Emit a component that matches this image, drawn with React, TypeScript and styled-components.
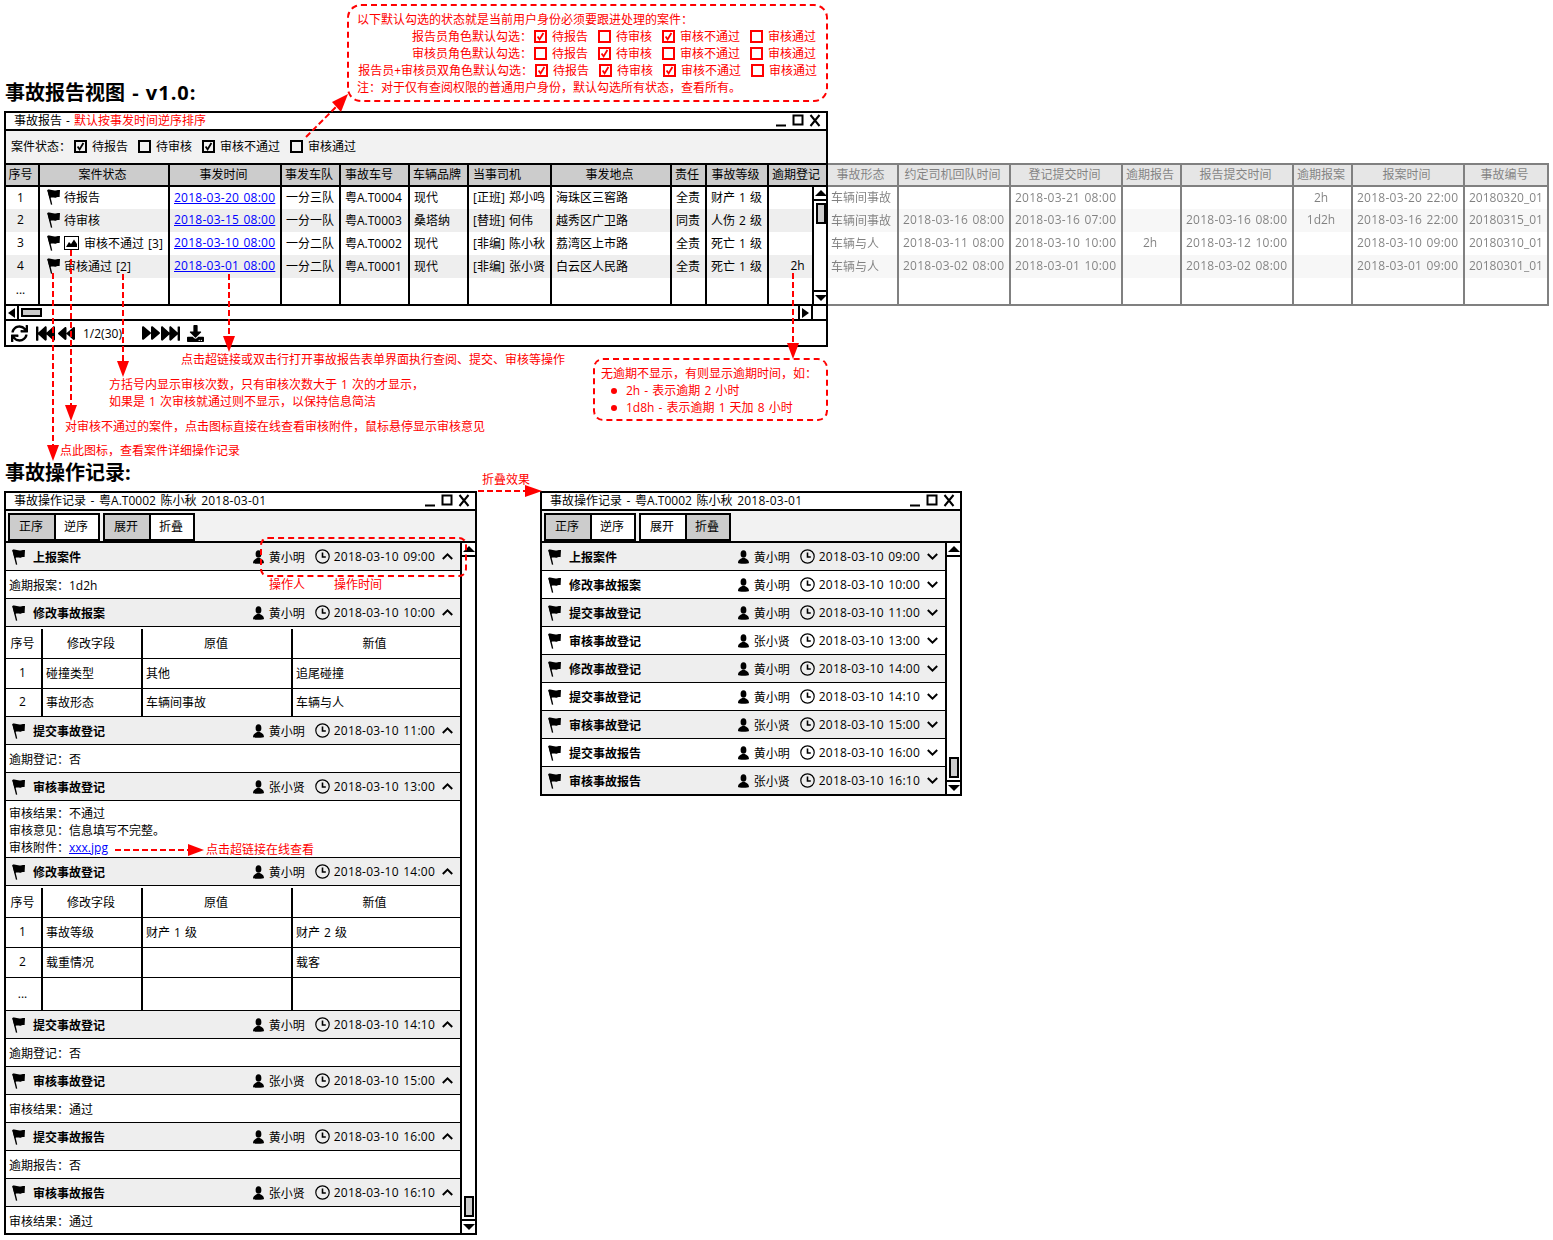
import React from "react";
import styled, { createGlobalStyle } from "styled-components";
import { FaSync, FaFastBackward, FaBackward, FaForward, FaFastForward, FaDownload } from "react-icons/fa";

const C = "\uFF1A";
const K = "\uFF0C";
const P = "\u3002";

const Global = createGlobalStyle`
  html, body { margin: 0; padding: 0; background: #fff; }
  body { font-family: "Open Sans", "Noto Sans CJK SC", sans-serif; font-size: 12px; color: #000; word-spacing: 1px; }
`;

const Canvas = styled.div`
  position: relative;
  width: 1553px;
  height: 1240px;
  overflow: hidden;
`;

const Heading = styled.h1<{ $y: number }>`
  position: absolute;
  left: 5px;
  top: ${(p) => p.$y}px;
  margin: 0;
  font-size: 20px;
  line-height: 24px;
  font-weight: 700;
  white-space: nowrap;
  word-spacing: 2px;
`;

const Version = styled.span`
  letter-spacing: 1px;
`;

const Win = styled.section<{ $x: number; $y: number; $w: number; $h: number }>`
  position: absolute;
  left: ${(p) => p.$x}px;
  top: ${(p) => p.$y}px;
  width: ${(p) => p.$w}px;
  height: ${(p) => p.$h}px;
  box-sizing: border-box;
  border: 2px solid #000;
  background: #fff;
  display: flex;
  flex-direction: column;
  overflow: hidden;
`;

const TitleBar = styled.header`
  height: 16px;
  flex: none;
  box-sizing: content-box;
  border-bottom: 2px solid #000;
  padding: 0 5px 0 8px;
  display: flex;
  align-items: center;
  justify-content: space-between;
  line-height: 16px;
  white-space: nowrap;
`;

const Red = styled.span`
  color: #f00;
`;

const WinControls = styled.span`
  display: flex;
  align-items: center;
`;

const Controls = () => (
  <WinControls>
    <svg width="45" height="14" viewBox="0 0 45 14">
      <rect x="0" y="10.5" width="10" height="2" fill="#000" />
      <rect x="17.5" y="1.5" width="9" height="9" fill="none" stroke="#000" strokeWidth="2" />
      <path d="M34.5 1 L43.5 12 M43.5 1 L34.5 12" stroke="#000" strokeWidth="2" fill="none" />
    </svg>
  </WinControls>
);

const FilterBar = styled.div`
  height: 32px;
  flex: none;
  box-sizing: border-box;
  background: #f2f2f2;
  display: flex;
  align-items: center;
  padding: 0 0 2px 5px;
`;

const FilterLabel = styled.span`
  width: 63px;
  flex: none;
  white-space: nowrap;
`;

const CheckItem = styled.label<{ $color?: string }>`
  display: inline-flex;
  align-items: center;
  gap: 5px;
  margin-right: 10px;
  color: ${(p) => p.$color || "#000"};
  white-space: nowrap;
`;

const Box = styled.span`
  width: 13px;
  height: 13px;
  box-sizing: border-box;
  border: 2px solid currentColor;
  display: inline-block;
  flex: none;
  position: relative;
`;

const Check = ({ on, label, color }: { on: boolean; label: string; color?: string }) => (
  <CheckItem $color={color}>
    <Box>
      {on && (
        <svg width="9" height="9" viewBox="0 0 9 9" style={{ display: "block" }}>
          <path d="M1.6 4.6 L3.6 7.4 L7.4 1" fill="none" stroke="currentColor" strokeWidth="1.8" />
        </svg>
      )}
    </Box>
    {label}
  </CheckItem>
);

const mainHead = "34px 130px 112px 59px 69px 59px 83px 120px 35px 62px 57px";
const mainBody = "34px 130px 112px 59px 69px 59px 83px 120px 35px 62px 43px";
const greyCols = "72px 112px 112px 59px 112px 59px 112px 84px";

const Grid = styled.div<{ $cols: string; $rows: string }>`
  display: grid;
  grid-template-columns: ${(p) => p.$cols};
  grid-template-rows: ${(p) => p.$rows};
`;

const MainHead = styled(Grid)`
  border-top: 2px solid #000;
  flex: none;
`;

const MainBody = styled.div`
  display: flex;
  flex: none;
  height: 117px;
  box-sizing: content-box;
  border-bottom: 2px solid #000;
`;

type CellKind = "head" | "headLeft" | "center" | "text";

const Cell = styled.div<{ $kind?: CellKind; $alt?: boolean; $end?: boolean; $shift?: number }>`
  box-sizing: border-box;
  display: flex;
  align-items: center;
  white-space: nowrap;
  overflow: hidden;
  justify-content: ${(p) => (p.$kind === "head" || p.$kind === "center" ? "center" : "flex-start")};
  padding: 0 ${(p) => (p.$kind === "head" || p.$kind === "center" ? 3 : 0)}px 2px
    ${(p) => p.$shift ?? (p.$kind === "head" || p.$kind === "center" ? 0 : 4)}px;
  background: ${(p) => (p.$kind === "head" || p.$kind === "headLeft" ? "#ccc" : p.$alt ? "#eee" : "#fff")};
  border-right: ${(p) => (p.$end ? "none" : "2px solid #000")};
  border-bottom: ${(p) => (p.$kind === "head" || p.$kind === "headLeft" ? "2px solid #000" : "none")};
`;

const StatusCell = styled(Cell)`
  padding-left: 7px;
  gap: 4px;
`;

const DateLink = styled.a`
  color: #00f;
  text-decoration: underline;
  letter-spacing: 0.25px;
`;

const DateText = styled.span`
  letter-spacing: 0.25px;
`;

const WinTitle = styled.span`
  word-spacing: 1.5px;
`;

const More = styled.span`
  color: #000;
  line-height: 12px;
`;

const ScrollCol = styled.div`
  flex: none;
  width: 13px;
  box-sizing: content-box;
  border-left: 2px solid #000;
  display: flex;
  flex-direction: column;
  background: #fff;
`;

const ArrowBox = styled.div<{ $edge: "top" | "bottom" }>`
  height: 12px;
  flex: none;
  box-sizing: content-box;
  display: flex;
  align-items: center;
  justify-content: center;
  ${(p) => (p.$edge === "top" ? "border-bottom: 2px solid #000;" : "border-top: 2px solid #000;")}
`;

const Tri = styled.i<{ $dir: "up" | "down" | "left" | "right" }>`
  width: 0;
  height: 0;
  display: block;
  ${(p) =>
    p.$dir === "up"
      ? "border-left:6px solid transparent;border-right:6px solid transparent;border-bottom:6px solid #000;"
      : p.$dir === "down"
      ? "border-left:6px solid transparent;border-right:6px solid transparent;border-top:6px solid #000;"
      : p.$dir === "left"
      ? "border-top:5px solid transparent;border-bottom:5px solid transparent;border-right:7px solid #000;"
      : "border-top:5px solid transparent;border-bottom:5px solid transparent;border-left:7px solid #000;"}
`;

const Track = styled.div<{ $end?: boolean }>`
  flex: 1;
  display: flex;
  flex-direction: column;
  align-items: center;
  justify-content: ${(p) => (p.$end ? "flex-end" : "flex-start")};
  padding: 2px 0;
`;

const VThumb = styled.div`
  width: 10px;
  height: 21px;
  box-sizing: border-box;
  border: 2px solid #000;
  background: #ccc;
  flex: none;
`;

const VScroll = ({ end }: { end?: boolean }) => (
  <ScrollCol>
    <ArrowBox $edge="top">
      <Tri $dir="up" />
    </ArrowBox>
    <Track $end={end}>
      <VThumb />
    </Track>
    <ArrowBox $edge="bottom">
      <Tri $dir="down" />
    </ArrowBox>
  </ScrollCol>
);

const HScrollBar = styled.div`
  height: 13px;
  flex: none;
  box-sizing: content-box;
  border-bottom: 2px solid #000;
  display: flex;
`;

const HArrow = styled.div<{ $side: "left" | "right" }>`
  flex: none;
  width: 11px;
  display: flex;
  align-items: center;
  justify-content: center;
  ${(p) =>
    p.$side === "left"
      ? "border-right: 2px solid #000;"
      : "border-left: 2px solid #000; border-right: 2px solid #000;"}
`;

const HTrack = styled.div`
  flex: 1;
  padding: 2px 2px;
`;

const HThumb = styled.div`
  width: 21px;
  height: 9px;
  box-sizing: border-box;
  border: 2px solid #000;
  background: #ccc;
`;

const HCorner = styled.div`
  width: 13px;
  flex: none;
`;

const Pager = styled.div`
  flex: 1;
  display: flex;
  align-items: center;
  padding-left: 5px;
`;

const PagerText = styled.span`
  margin: 0 18px 0 8px;
  width: 41px;
  white-space: nowrap;
`;

const PagerIcon = styled.span<{ $ml?: number }>`
  display: inline-flex;
  margin-left: ${(p) => p.$ml ?? 0}px;
`;

const GreyTable = styled(Grid)`
  position: absolute;
  left: 827px;
  top: 163px;
  width: 722px;
  border-top: 2px solid #000;
  border-bottom: 2px solid #000;
  opacity: 0.5;
`;

const Callout = styled.aside<{ $x: number; $y: number; $w: number; $h: number; $r: number }>`
  position: absolute;
  left: ${(p) => p.$x}px;
  top: ${(p) => p.$y}px;
  width: ${(p) => p.$w}px;
  height: ${(p) => p.$h}px;
  box-sizing: border-box;
  border: 2px dashed #f00;
  border-radius: ${(p) => p.$r}px;
  color: #f00;
  line-height: 17px;
  white-space: nowrap;
`;

const RoleCallout = styled(Callout)`
  padding: 5px 0 0 8px;
`;

const RoleRow = styled.div`
  display: flex;
  align-items: center;
  height: 17px;
`;

const RoleLabel = styled.span<{ $w: number }>`
  width: ${(p) => p.$w}px;
  flex: none;
  box-sizing: border-box;
  padding-right: 2px;
  text-align: right;
  word-spacing: 0;
  margin-left: -1px;
`;

const OverdueCallout = styled(Callout)`
  padding: 5px 0 0 6px;
`;

const BulletRow = styled.div`
  display: flex;
  align-items: center;
  gap: 9px;
  padding-left: 10px;
`;

const Dot = styled.i`
  width: 6px;
  height: 6px;
  border-radius: 50%;
  background: #f00;
  flex: none;
`;

const Note = styled.div<{ $x: number; $y: number }>`
  position: absolute;
  left: ${(p) => p.$x}px;
  top: ${(p) => p.$y}px;
  color: #f00;
  line-height: 17px;
  white-space: nowrap;
`;

const Overlay = styled.svg`
  position: absolute;
  left: 0;
  top: 0;
  pointer-events: none;
`;

const HiLite = styled(Callout)`
  pointer-events: none;
`;

const Toolbar = styled.div`
  height: 28px;
  flex: none;
  box-sizing: content-box;
  border-bottom: 2px solid #000;
  background: #f2f2f2;
  display: flex;
  gap: 3px;
  padding: 2px 0 0 2px;
`;

const Seg = styled.div`
  display: flex;
  height: 28px;
  box-sizing: border-box;
  border: 2px solid #000;
`;

const SegBtn = styled.div<{ $on?: boolean }>`
  width: 44px;
  box-sizing: border-box;
  padding: 0 2px 2px 0;
  display: flex;
  align-items: center;
  justify-content: center;
  background: ${(p) => (p.$on ? "#ccc" : "#fff")};
  & + & {
    border-left: 2px solid #000;
  }
`;

const LogMain = styled.div`
  flex: 1;
  display: flex;
  min-height: 0;
`;

const LogList = styled.div`
  flex: 1;
  min-width: 0;
  display: flex;
  flex-direction: column;
`;

const LogHead = styled.div<{ $alt: boolean }>`
  height: 28px;
  flex: none;
  box-sizing: border-box;
  border-bottom: 1px solid #000;
  background: ${(p) => (p.$alt ? "#eee" : "#fff")};
  display: flex;
  align-items: center;
  padding: 0 7px 0 6px;
`;

const LogTitle = styled.b`
  margin-left: 8px;
  font-weight: 700;
  white-space: nowrap;
`;

const LogMeta = styled.span`
  margin-left: auto;
  display: flex;
  align-items: center;
  white-space: nowrap;
`;

const Who = styled.span`
  margin: 0 10px 0 5px;
  width: 36px;
`;

const When = styled.span`
  margin: 0 7px 0 4px;
  letter-spacing: 0.25px;
`;

const LogBody = styled.div<{ $h: number }>`
  height: ${(p) => p.$h}px;
  flex: none;
  box-sizing: border-box;
  border-bottom: 1px solid #000;
  padding: 2px 0 0 3px;
  display: flex;
  flex-direction: column;
  justify-content: center;
  line-height: 17px;
`;

const BodyLink = styled.a`
  color: #00f;
  text-decoration: underline;
`;

const SubTable = styled.div<{ $h: number }>`
  height: ${(p) => p.$h}px;
  flex: none;
  box-sizing: border-box;
  border-bottom: 1px solid #000;
  padding-top: 2px;
  display: flex;
  flex-direction: column;
`;

const SubRow = styled.div<{ $last?: boolean }>`
  display: grid;
  grid-template-columns: 37px 100px 150px 165px;
  ${(p) => (p.$last ? "flex: 1;" : "height: 30px; flex: none; box-sizing: border-box; border-bottom: 1px solid #000;")}
`;

const SubCell = styled.div<{ $kind?: "center" | "text"; $end?: boolean }>`
  display: flex;
  align-items: center;
  justify-content: ${(p) => (p.$kind === "center" ? "center" : "flex-start")};
  padding: 0 ${(p) => (p.$kind === "center" ? 2 : 0)}px 2px ${(p) => (p.$kind === "center" ? 0 : 3)}px;
  box-sizing: border-box;
  border-right: ${(p) => (p.$end ? "none" : "2px solid #000")};
  white-space: nowrap;
`;

const FlagIcon = () => (
  <svg width="13" height="16" viewBox="0 0 13 16" style={{ flex: "none" }}>
    <path d="M.3 1 C3 -.2 5 1.6 7.5 1.6 C9.5 1.6 11 .6 13 1 L12.6 8 C10.5 7.6 9 9 6.8 8.6 C5 8.3 3.5 8.3 2.6 9.5 Z" fill="#000" />
    <path d="M1 1 L4.6 15.6" stroke="#000" strokeWidth="1.4" fill="none" />
  </svg>
);

const ImageIcon = () => (
  <svg width="16" height="14" viewBox="0 0 16 14" style={{ flex: "none" }}>
    <rect x=".5" y=".5" width="14" height="13" fill="#fff" stroke="#000" />
    <path d="M2 11 L5 6 L7 8 L10 3.5 L13 8 V11 Z" fill="#000" />
  </svg>
);

const UserIcon = () => (
  <svg width="11" height="14" viewBox="0 0 11 14" style={{ flex: "none" }}>
    <ellipse cx="5.5" cy="4" rx="2.9" ry="3.8" fill="#000" />
    <path d="M0 13 C0 9.8 2.4 9.2 4 8 H7 C8.6 9.2 11 9.8 11 13 C11 14 0 14 0 13 Z" fill="#000" />
  </svg>
);

const ClockIcon = () => (
  <svg width="15" height="15" viewBox="0 0 15 15" style={{ flex: "none" }}>
    <circle cx="7.5" cy="7.5" r="6.7" fill="none" stroke="#000" strokeWidth="1.2" />
    <path d="M7.5 3.5 V8 H10.8" fill="none" stroke="#000" strokeWidth="1.6" />
  </svg>
);

const Chevron = ({ up }: { up: boolean }) => (
  <svg width="11" height="7" viewBox="0 0 11 7" style={{ flex: "none" }}>
    <path d={up ? "M.8 6 L5.5 1.4 L10.2 6" : "M.8 1 L5.5 5.6 L10.2 1"} fill="none" stroke="#000" strokeWidth="2" />
  </svg>
);

const EntryHead = ({ title, who, when, alt, up }: { title: string; who: string; when: string; alt: boolean; up: boolean }) => (
  <LogHead $alt={alt}>
    <FlagIcon />
    <LogTitle>{title}</LogTitle>
    <LogMeta>
      <UserIcon />
      <Who>{who}</Who>
      <ClockIcon />
      <When>{when}</When>
      <Chevron up={up} />
    </LogMeta>
  </LogHead>
);

const ChangeTable = ({ h, rows }: { h: number; rows: string[][] }) => (
  <SubTable $h={h}>
    <SubRow>
      <SubCell $kind="center">序号</SubCell>
      <SubCell $kind="center">修改字段</SubCell>
      <SubCell $kind="center">原值</SubCell>
      <SubCell $kind="center" $end>新值</SubCell>
    </SubRow>
    {rows.map((r, i) => (
      <SubRow key={i} $last={i === rows.length - 1}>
        <SubCell $kind="center">{r[0]}</SubCell>
        <SubCell>{r[1]}</SubCell>
        <SubCell>{r[2]}</SubCell>
        <SubCell $end>{r[3]}</SubCell>
      </SubRow>
    ))}
  </SubTable>
);

const LogToolbar = ({ expanded }: { expanded: boolean }) => (
  <Toolbar>
    <Seg>
      <SegBtn $on>正序</SegBtn>
      <SegBtn>逆序</SegBtn>
    </Seg>
    <Seg>
      <SegBtn $on={expanded}>展开</SegBtn>
      <SegBtn $on={!expanded}>折叠</SegBtn>
    </Seg>
  </Toolbar>
);

const mainRows = [
  { n: "1", st: "待报告", d: "2018-03-20 08:00", team: "一分三队", car: "粤A.T0004", brand: "现代", drv: "[正班] 郑小鸣", loc: "海珠区三窖路", duty: "全责", lvl: "财产 1 级", late: "" },
  { n: "2", st: "待审核", d: "2018-03-15 08:00", team: "一分一队", car: "粤A.T0003", brand: "桑塔纳", drv: "[替班] 何伟", loc: "越秀区广卫路", duty: "同责", lvl: "人伤 2 级", late: "" },
  { n: "3", st: "审核不通过 [3]", img: true, d: "2018-03-10 08:00", team: "一分二队", car: "粤A.T0002", brand: "现代", drv: "[非编] 陈小秋", loc: "荔湾区上市路", duty: "全责", lvl: "死亡 1 级", late: "" },
  { n: "4", st: "审核通过 [2]", d: "2018-03-01 08:00", team: "一分二队", car: "粤A.T0001", brand: "现代", drv: "[非编] 张小贤", loc: "白云区人民路", duty: "全责", lvl: "死亡 1 级", late: "2h" },
];

const greyHeads = ["事故形态", "约定司机回队时间", "登记提交时间", "逾期报告", "报告提交时间", "逾期报案", "报案时间", "事故编号"];
const greyRows = [
  ["车辆间事故", "", "2018-03-21 08:00", "", "", "2h", "2018-03-20 22:00", "20180320_01"],
  ["车辆间事故", "2018-03-16 08:00", "2018-03-16 07:00", "", "2018-03-16 08:00", "1d2h", "2018-03-16 22:00", "20180315_01"],
  ["车辆与人", "2018-03-11 08:00", "2018-03-10 10:00", "2h", "2018-03-12 10:00", "", "2018-03-10 09:00", "20180310_01"],
  ["车辆与人", "2018-03-02 08:00", "2018-03-01 10:00", "", "2018-03-02 08:00", "", "2018-03-01 09:00", "20180301_01"],
  ["", "", "", "", "", "", "", ""],
];

const mainHeads = ["序号", "案件状态", "事发时间", "事发车队", "事故车号", "车辆品牌", "当事司机", "事发地点", "责任", "事故等级", "逾期登记"];
const leftHeads = new Set(["事故车号", "当事司机"]);

const collapsed = [
  ["上报案件", "黄小明", "2018-03-10 09:00"],
  ["修改事故报案", "黄小明", "2018-03-10 10:00"],
  ["提交事故登记", "黄小明", "2018-03-10 11:00"],
  ["审核事故登记", "张小贤", "2018-03-10 13:00"],
  ["修改事故登记", "黄小明", "2018-03-10 14:00"],
  ["提交事故登记", "黄小明", "2018-03-10 14:10"],
  ["审核事故登记", "张小贤", "2018-03-10 15:00"],
  ["提交事故报告", "黄小明", "2018-03-10 16:00"],
  ["审核事故报告", "张小贤", "2018-03-10 16:10"],
];

const DashArrowV = ({ x, from, to }: { x: number; from: number; to: number }) => (
  <g>
    <line x1={x} y1={from} x2={x} y2={to - 16} stroke="#f00" strokeWidth="2" strokeDasharray="6 3" />
    <polygon points={`${x - 6},${to - 16} ${x + 6},${to - 16} ${x},${to}`} fill="#f00" />
  </g>
);

const Role = ({ label, w, on }: { label: string; w: number; on: boolean[] }) => (
  <RoleRow>
    <RoleLabel $w={w}>{label}</RoleLabel>
    <Check on={on[0]} label="待报告" color="#f00" />
    <Check on={on[1]} label="待审核" color="#f00" />
    <Check on={on[2]} label="审核不通过" color="#f00" />
    <Check on={on[3]} label="审核通过" color="#f00" />
  </RoleRow>
);

export default function App() {
  return (
    <Canvas>
      <Global />
      <RoleCallout $x={347} $y={4} $w={481} $h={98} $r={14}>
        <div>{`以下默认勾选的状态就是当前用户身份必须要跟进处理的案件${C}`}</div>
        <Role label={`报告员角色默认勾选${C}`} w={178} on={[true, false, true, false]} />
        <Role label={`审核员角色默认勾选${C}`} w={178} on={[false, true, false, false]} />
        <Role label={`报告员+审核员双角色默认勾选${C}`} w={179} on={[true, true, true, false]} />
        <div>{`注${C}对于仅有查阅权限的普通用户身份${K}默认勾选所有状态${K}查看所有${P}`}</div>
      </RoleCallout>

      <Heading $y={81}>
        事故报告视图 - <Version>v1.0:</Version>
      </Heading>

      <GreyTable $cols={greyCols} $rows="22px 22px 23px 23px 23px 26px">
        {greyHeads.map((h) => (
          <Cell key={h} $kind="head">{h}</Cell>
        ))}
        {greyRows.flatMap((r, i) =>
          r.map((c, j) => (
            <Cell key={`${i}-${j}`} $alt={i % 2 === 1} $kind={j === 3 || j === 5 ? "center" : "text"}>
              {c.length === 16 ? <DateText>{c}</DateText> : c}
            </Cell>
          ))
        )}
      </GreyTable>

      <Win $x={4} $y={111} $w={824} $h={236}>
        <TitleBar>
          <span>
            事故报告 - <Red>默认按事发时间逆序排序</Red>
          </span>
          <Controls />
        </TitleBar>
        <FilterBar>
          <FilterLabel>{`案件状态${C}`}</FilterLabel>
          <Check on label="待报告" />
          <Check on={false} label="待审核" />
          <Check on label="审核不通过" />
          <Check on={false} label="审核通过" />
        </FilterBar>
        <MainHead $cols={mainHead} $rows="22px">
          {mainHeads.map((h, i) => (
            <Cell
              key={h}
              $kind={leftHeads.has(h) ? "headLeft" : "head"}
              $end={i === mainHeads.length - 1}
            >
              {h}
            </Cell>
          ))}
        </MainHead>
        <MainBody>
          <Grid $cols={mainBody} $rows="22px 23px 23px 23px 26px">
            {mainRows.flatMap((r, i) => {
              const alt = i % 2 === 1;
              return [
                <Cell key={`${i}n`} $alt={alt} $kind="center">{r.n}</Cell>,
                <StatusCell key={`${i}s`} $alt={alt}>
                  <FlagIcon />
                  {r.img && <ImageIcon />}
                  <span>{r.st}</span>
                </StatusCell>,
                <Cell key={`${i}d`} $alt={alt}><DateLink href="#">{r.d}</DateLink></Cell>,
                <Cell key={`${i}t`} $alt={alt}>{r.team}</Cell>,
                <Cell key={`${i}c`} $alt={alt}>{r.car}</Cell>,
                <Cell key={`${i}b`} $alt={alt}>{r.brand}</Cell>,
                <Cell key={`${i}dr`} $alt={alt}>{r.drv}</Cell>,
                <Cell key={`${i}l`} $alt={alt}>{r.loc}</Cell>,
                <Cell key={`${i}du`} $alt={alt}>{r.duty}</Cell>,
                <Cell key={`${i}lv`} $alt={alt}>{r.lvl}</Cell>,
                <Cell key={`${i}la`} $alt={alt} $kind="center" $shift={17} $end>{r.late}</Cell>,
              ];
            })}
            <Cell $kind="center"><More>...</More></Cell>
            <Cell />
            <Cell />
            <Cell />
            <Cell />
            <Cell />
            <Cell />
            <Cell />
            <Cell />
            <Cell />
            <Cell $end />
          </Grid>
          <VScroll />
        </MainBody>
        <HScrollBar>
          <HArrow $side="left"><Tri $dir="left" /></HArrow>
          <HTrack><HThumb /></HTrack>
          <HArrow $side="right"><Tri $dir="right" /></HArrow>
          <HCorner />
        </HScrollBar>
        <Pager>
          <PagerIcon><FaSync size={17} /></PagerIcon>
          <PagerIcon $ml={8}><FaFastBackward size={19} /></PagerIcon>
          <PagerIcon $ml={3}><FaBackward size={17} /></PagerIcon>
          <PagerText>1/2(30)</PagerText>
          <PagerIcon><FaForward size={18} /></PagerIcon>
          <PagerIcon $ml={1}><FaFastForward size={19} /></PagerIcon>
          <PagerIcon $ml={7}><FaDownload size={17} /></PagerIcon>
        </Pager>
      </Win>

      <Note $x={181} $y={351}>点击超链接或双击行打开事故报告表单界面执行查阅、提交、审核等操作</Note>
      <Note $x={109} $y={376}>
        {`方括号内显示审核次数${K}只有审核次数大于 1 次的才显示${K}`}
        <br />
        {`如果是 1 次审核就通过则不显示${K}以保持信息简洁`}
      </Note>
      <Note $x={65} $y={418}>{`对审核不通过的案件${K}点击图标直接在线查看审核附件${K}鼠标悬停显示审核意见`}</Note>
      <Note $x={60} $y={442}>{`点此图标${K}查看案件详细操作记录`}</Note>

      <OverdueCallout $x={593} $y={358} $w={235} $h={63} $r={10}>
        <div>{`无逾期不显示${K}有则显示逾期时间${K}如${C}`}</div>
        <BulletRow><Dot />2h - 表示逾期 2 小时</BulletRow>
        <BulletRow><Dot />1d8h - 表示逾期 1 天加 8 小时</BulletRow>
      </OverdueCallout>

      <Heading $y={461}>事故操作记录:</Heading>
      <Note $x={482} $y={471}>折叠效果</Note>

      <Win $x={4} $y={491} $w={473} $h={744}>
        <TitleBar>
          <WinTitle>事故操作记录 - 粤A.T0002 陈小秋 <DateText>2018-03-01</DateText></WinTitle>
          <Controls />
        </TitleBar>
        <LogToolbar expanded />
        <LogMain>
          <LogList>
            <EntryHead alt up title="上报案件" who="黄小明" when="2018-03-10 09:00" />
            <LogBody $h={28}>{`逾期报案${C}1d2h`}</LogBody>
            <EntryHead alt up title="修改事故报案" who="黄小明" when="2018-03-10 10:00" />
            <ChangeTable
              h={90}
              rows={[
                ["1", "碰撞类型", "其他", "追尾碰撞"],
                ["2", "事故形态", "车辆间事故", "车辆与人"],
              ]}
            />
            <EntryHead alt up title="提交事故登记" who="黄小明" when="2018-03-10 11:00" />
            <LogBody $h={28}>{`逾期登记${C}否`}</LogBody>
            <EntryHead alt up title="审核事故登记" who="张小贤" when="2018-03-10 13:00" />
            <LogBody $h={57}>
              <div>{`审核结果${C}不通过`}</div>
              <div>{`审核意见${C}信息填写不完整${P}`}</div>
              <div>
                {`审核附件${C}`}
                <BodyLink href="#">xxx.jpg</BodyLink>
              </div>
            </LogBody>
            <EntryHead alt up title="修改事故登记" who="黄小明" when="2018-03-10 14:00" />
            <ChangeTable
              h={125}
              rows={[
                ["1", "事故等级", "财产 1 级", "财产 2 级"],
                ["2", "载重情况", "", "载客"],
                ["...", "", "", ""],
              ]}
            />
            <EntryHead alt up title="提交事故登记" who="黄小明" when="2018-03-10 14:10" />
            <LogBody $h={28}>{`逾期登记${C}否`}</LogBody>
            <EntryHead alt up title="审核事故登记" who="张小贤" when="2018-03-10 15:00" />
            <LogBody $h={28}>{`审核结果${C}通过`}</LogBody>
            <EntryHead alt up title="提交事故报告" who="黄小明" when="2018-03-10 16:00" />
            <LogBody $h={28}>{`逾期报告${C}否`}</LogBody>
            <EntryHead alt up title="审核事故报告" who="张小贤" when="2018-03-10 16:10" />
            <LogBody $h={28}>{`审核结果${C}通过`}</LogBody>
          </LogList>
          <VScroll end />
        </LogMain>
      </Win>

      <Note $x={269} $y={576}>操作人</Note>
      <Note $x={334} $y={576}>操作时间</Note>
      <Note $x={206} $y={841}>点击超链接在线查看</Note>
      <HiLite $x={260} $y={537} $w={207} $h={40} $r={8} />

      <Win $x={540} $y={491} $w={422} $h={305}>
        <TitleBar>
          <WinTitle>事故操作记录 - 粤A.T0002 陈小秋 <DateText>2018-03-01</DateText></WinTitle>
          <Controls />
        </TitleBar>
        <LogToolbar expanded={false} />
        <LogMain>
          <LogList>
            {collapsed.map((c, i) => (
              <EntryHead key={i} alt={i % 2 === 0} up={false} title={c[0]} who={c[1]} when={c[2]} />
            ))}
          </LogList>
          <VScroll end />
        </LogMain>
      </Win>

      <Overlay width="1553" height="1240" viewBox="0 0 1553 1240">
        <line x1="306" y1="137" x2="337" y2="106" stroke="#f00" strokeWidth="2" strokeDasharray="6 3" />
        <polygon points="348,94 332,102 341,112" fill="#f00" />
        <DashArrowV x={53} from={273} to={461} />
        <DashArrowV x={71} from={250} to={421} />
        <DashArrowV x={123} from={274} to={377} />
        <DashArrowV x={229} from={274} to={352} />
        <DashArrowV x={793} from={273} to={359} />
        <line x1="478" y1="491" x2="525" y2="491" stroke="#f00" strokeWidth="2" strokeDasharray="6 3" />
        <polygon points="525,485 525,497 542,491" fill="#f00" />
        <line x1="115" y1="850" x2="188" y2="850" stroke="#f00" strokeWidth="2" strokeDasharray="6 3" />
        <polygon points="188,844 188,856 204,850" fill="#f00" />
      </Overlay>
    </Canvas>
  );
}
